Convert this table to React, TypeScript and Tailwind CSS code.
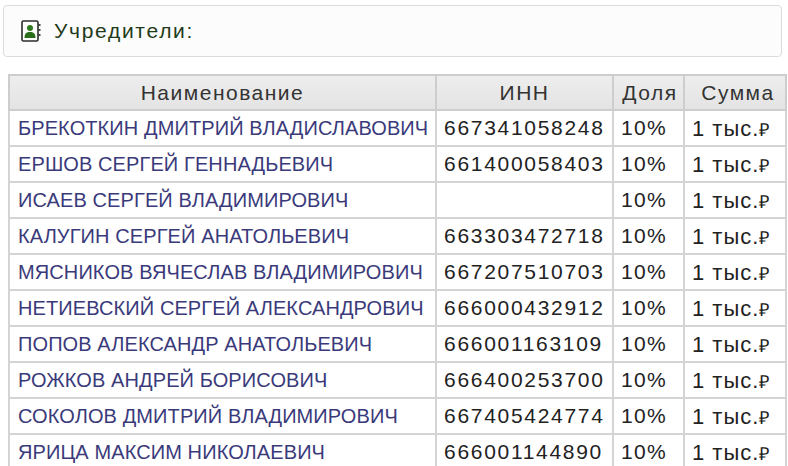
const rows = [
  { name: "БРЕКОТКИН ДМИТРИЙ ВЛАДИСЛАВОВИЧ", inn: "667341058248" },
  { name: "ЕРШОВ СЕРГЕЙ ГЕННАДЬЕВИЧ", inn: "661400058403" },
  { name: "ИСАЕВ СЕРГЕЙ ВЛАДИМИРОВИЧ", inn: "" },
  { name: "КАЛУГИН СЕРГЕЙ АНАТОЛЬЕВИЧ", inn: "663303472718" },
  { name: "МЯСНИКОВ ВЯЧЕСЛАВ ВЛАДИМИРОВИЧ", inn: "667207510703" },
  { name: "НЕТИЕВСКИЙ СЕРГЕЙ АЛЕКСАНДРОВИЧ", inn: "666000432912" },
  { name: "ПОПОВ АЛЕКСАНДР АНАТОЛЬЕВИЧ", inn: "666001163109" },
  { name: "РОЖКОВ АНДРЕЙ БОРИСОВИЧ", inn: "666400253700" },
  { name: "СОКОЛОВ ДМИТРИЙ ВЛАДИМИРОВИЧ", inn: "667405424774" },
  { name: "ЯРИЦА МАКСИМ НИКОЛАЕВИЧ", inn: "666001144890" },
];

function ContactIcon() {
  return (
    <svg width="21" height="22" viewBox="0 0 21 22">
      <rect x="1" y="1" width="16" height="20" rx="1.5" fill="#fff" stroke="#2b2b2b" strokeWidth="1.6" />
      <rect x="17" y="4" width="2.5" height="2" fill="#444" />
      <rect x="17" y="9" width="2.5" height="2" fill="#444" />
      <rect x="17" y="14" width="2.5" height="2" fill="#444" />
      <circle cx="9" cy="8" r="3" fill="#2f7a1f" />
      <path d="M3.5 18 C3.5 13.5 5.5 12 9 12 C12.5 12 14.5 13.5 14.5 18 Z" fill="#2a6e1a" />
    </svg>
  );
}

export default function App() {
  return (
    <div className="min-h-[466px] bg-white font-['Liberation_Sans',Arial,sans-serif]">
      <div className="px-[3px] pt-[5px]">
        <div className="flex h-[52px] w-[779px] items-center gap-[12px] rounded-[4px] border border-[#dcdcdc] bg-[#fcfcfc] pl-[17px]">
          <ContactIcon />
          <span className="text-[21px] tracking-[1.7px] text-[#1f3b1a]">Учредители:</span>
        </div>
      </div>

      <div className="pl-[8px] pt-[17px]">
        <table className="w-[777px] table-fixed border-collapse text-[21px]">
          <colgroup>
            <col className="w-[427px]" />
            <col className="w-[177px]" />
            <col className="w-[71px]" />
            <col className="w-[102px]" />
          </colgroup>
          <thead>
            <tr className="h-[35px] bg-gradient-to-b from-[#eeeeee] to-[#e3e3e3] tracking-[1.5px] text-[#333]">
              <th className="border-2 border-[#cdcdcd] font-normal">Наименование</th>
              <th className="border-2 border-[#cdcdcd] font-normal">ИНН</th>
              <th className="border-2 border-[#cdcdcd] pl-[3px] font-normal">Доля</th>
              <th className="border-2 border-[#cdcdcd] pl-[6px] font-normal">Сумма</th>
            </tr>
          </thead>
          <tbody>
            {rows.map((r) => (
              <tr key={r.name} className="h-[36px]">
                <td className="whitespace-nowrap border-2 border-[#d4d4d4] pl-[8px] text-[20px] tracking-[0.1px] text-[#3a3a7a]">
                  {r.name}
                </td>
                <td className="border-2 border-[#d4d4d4] pl-[7px] tracking-[1.7px] text-[#222]">{r.inn}</td>
                <td className="border-2 border-[#d4d4d4] pl-[7px] tracking-[1.3px] text-[#222]">10%</td>
                <td className="whitespace-nowrap border-2 border-[#d4d4d4] pl-[7px] text-[22px] tracking-[1px] text-[#222]">
                  1 тыс.<span className="text-[18px]">₽</span>
                </td>
              </tr>
            ))}
          </tbody>
        </table>
      </div>
    </div>
  );
}
